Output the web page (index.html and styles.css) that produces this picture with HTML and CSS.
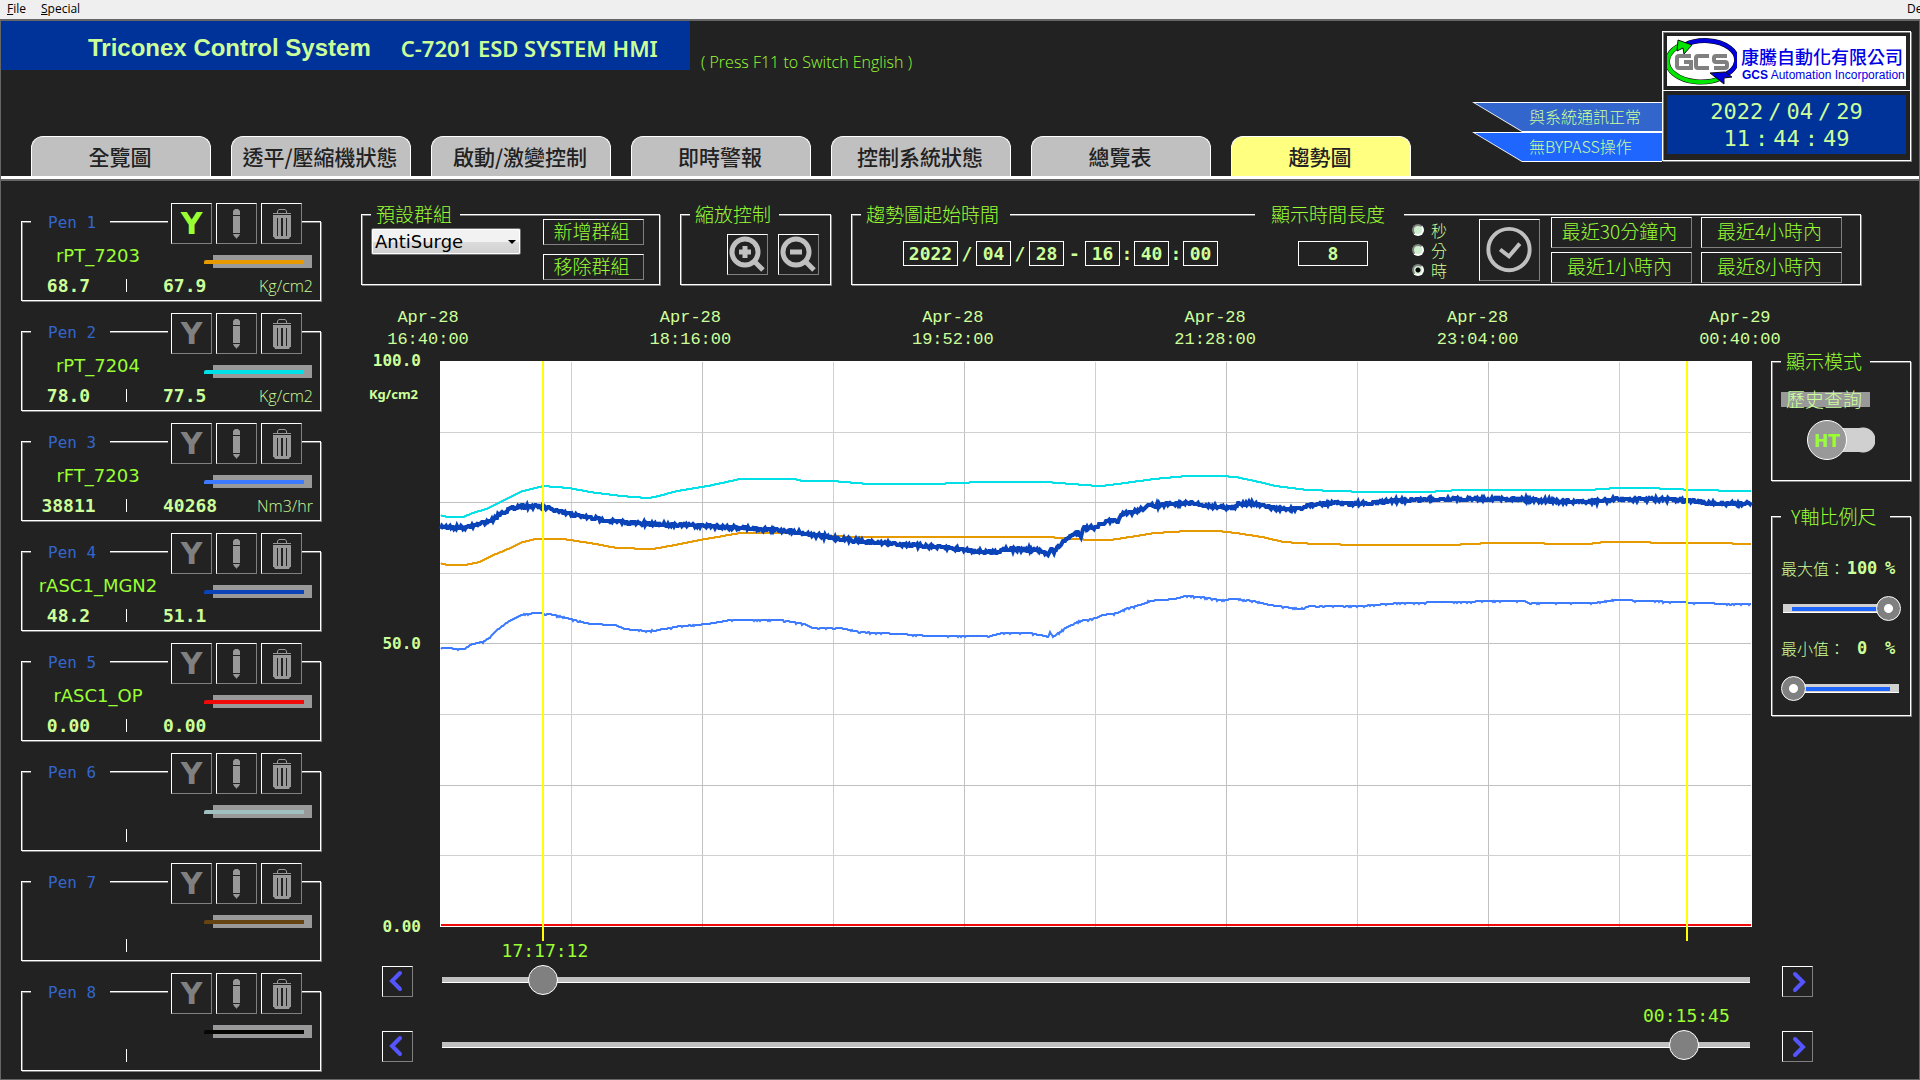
FILE: index.html
```html
<!DOCTYPE html>
<html lang="zh-Hant">
<head>
<meta charset="utf-8">
<title>Triconex Control System</title>
<link rel="stylesheet" href="styles.css">
</head>
<body>
<svg class="defs" aria-hidden="true">
  <symbol id="i-pencil" viewBox="0 0 39 39">
    <path d="M16 7l2-2h3l2 2v4h-7zM16 12h7v17h-7zM16 30h7l-1 2-2 2-.5 1-.5-1-2-2z"/>
  </symbol>
  <symbol id="i-trash" viewBox="0 0 39 39">
    <path d="M15 9V7l2-2h6l2 2v2h4v1H11V9zM16 9h8V7l-1-1h-6l-1 1z"/>
    <path fill-rule="evenodd" d="M11 11h18v22h-1l-1 2H13l-1-2h-1zM15 14v18h1V14zM19 14v18h2V14zM24 14v18h1V14z"/>
  </symbol>
</svg>

<nav class="menubar">
  <a href="#"><u>F</u>ile</a>
  <a href="#"><u>S</u>pecial</a>
  <span class="cut">De</span>
</nav>

<div class="frame">
<header class="header">
  <div class="titles">
    <h1><span class="brand">Triconex Control System</span><span class="system">C-7201 ESD SYSTEM HMI</span></h1>
    <p>( Press F11 to Switch English )</p>
  </div>
  <nav class="tabs">
    <a href="#">全覽圖</a>
    <a href="#">透平/壓縮機狀態</a>
    <a href="#">啟動/激變控制</a>
    <a href="#">即時警報</a>
    <a href="#">控制系統狀態</a>
    <a href="#">總覽表</a>
    <a href="#" class="active">趨勢圖</a>
  </nav>
  <div class="status">
    <div class="flags">
      <div class="flag"><span>與系統通訊正常</span></div>
      <div class="flag bright"><span>無BYPASS操作</span></div>
    </div>
    <div class="plate">
      <div class="logo">
        <svg viewBox="0 0 70 50" width="70" height="50">
          <path d="M54 42A31 19 0 1 1 14 9" fill="none" stroke="#111" stroke-width="5"/>
          <path d="M18 9A31 19 0 0 1 58 39" fill="none" stroke="#111" stroke-width="5"/>
          <path d="M54 42A31 19 0 0 1 14 9" fill="none" stroke="#00e600" stroke-width="4"/>
          <path d="M18 9A31 19 0 0 1 58 39" fill="none" stroke="#0000d8" stroke-width="4"/>
          <path d="M11 4l14 5-8 9-1-6-6 3z" fill="#00e600" stroke="#111"/>
          <path d="M43 37l15-1 7 5-8 1v6z" fill="#0000d8" stroke="#111"/>
          <path d="M24 20H12q-2 0-2 2v8q0 2 2 2h12v-6h-7M42 20H31q-2 0-2 2v8q0 2 2 2h11M60 20H49q-2 0-2 2v2q0 2 2 2h9q2 0 2 2v2q0 2-2 2H47" fill="none" stroke="#808080" stroke-width="4"/>
        </svg>
        <div><span class="zh">康騰自動化有限公司</span><span class="en"><b>GCS</b> Automation Incorporation</span></div>
      </div>
      <div class="clock">
        <time><span>2022</span><span>/</span><span>04</span><span>/</span><span>29</span></time>
        <time><span>11</span><span>:</span><span>44</span><span>:</span><span>49</span></time>
      </div>
    </div>
  </div>
</header>

<div class="content">
<aside class="pens" id="pens"></aside>

<main class="main">
  <div class="toolbar">
    <section class="group preset">
      <h2 class="cap">預設群組</h2>
      <div class="select"><select aria-label="預設群組"><option>AntiSurge</option></select></div>
      <div class="stack">
        <button class="btn">新增群組</button>
        <button class="btn">移除群組</button>
      </div>
    </section>
    <section class="group zoom">
      <h2 class="cap">縮放控制</h2>
      <button class="btn" aria-label="放大"><svg viewBox="0 0 39 39"><circle cx="17" cy="17" r="13"/><path d="M27 27l8 8M11 17h12M17 11v12"/></svg></button>
      <button class="btn" aria-label="縮小"><svg viewBox="0 0 39 39"><circle cx="17" cy="17" r="13"/><path d="M27 27l8 8M11 17h12"/></svg></button>
    </section>
    <section class="group period">
      <h2 class="cap start">趨勢圖起始時間</h2>
      <h2 class="cap length">顯示時間長度</h2>
      <div class="datetime">
        <input class="num year" aria-label="年" value="2022"><span>/</span><input class="num" aria-label="月" value="04"><span>/</span><input class="num" aria-label="日" value="28"><span class="dash">-</span><input class="num" aria-label="時" value="16"><span class="colon">:</span><input class="num" aria-label="分" value="40"><span class="colon">:</span><input class="num" aria-label="秒" value="00">
      </div>
      <input class="num hours" aria-label="顯示時間長度" value="8">
      <div class="units">
        <label><input type="radio" name="unit">秒</label>
        <label><input type="radio" name="unit">分</label>
        <label><input type="radio" name="unit" checked>時</label>
      </div>
      <button class="btn apply" aria-label="套用"><svg viewBox="0 0 59 61"><circle cx="29" cy="30" r="21"/><path d="M20 30l9 7 11-13"/></svg></button>
      <div class="ranges">
        <button class="btn">最近30分鐘內</button>
        <button class="btn">最近4小時內</button>
        <button class="btn">最近1小時內</button>
        <button class="btn">最近8小時內</button>
      </div>
    </section>
  </div>

  <div class="trend">
    <div class="xaxis">
      <span>Apr-28<br>16:40:00</span>
      <span>Apr-28<br>18:16:00</span>
      <span>Apr-28<br>19:52:00</span>
      <span>Apr-28<br>21:28:00</span>
      <span>Apr-28<br>23:04:00</span>
      <span>Apr-29<br>00:40:00</span>
    </div>
    <div class="yaxis">
      <div>100.0<span>Kg/cm2</span></div>
      <div>50.0</div>
      <div>0.00</div>
    </div>
    <div class="plot"><svg id="plot" viewBox="0 0 1312 566" preserveAspectRatio="none"></svg></div>
    <div class="side">
      <section class="group mode">
        <h2 class="cap">顯示模式</h2>
        <span class="badge">歷史查詢</span>
        <button class="toggle" role="switch" aria-checked="false"><span>HT</span></button>
      </section>
      <section class="group scale">
        <h2 class="cap">Y軸比例尺</h2>
        <label for="ymax"><span>最大值：</span><b>100</b><b>%</b></label>
        <input id="ymax" type="range" value="100">
        <label for="ymin"><span>最小值：</span><b>0</b><b>%</b></label>
        <input id="ymin" type="range" value="0">
      </section>
    </div>
    <div class="scrub">
      <button class="btn step" aria-label="游標一向左"><svg viewBox="0 0 29 29"><path d="M17 6l-8 8 8 8"/></svg></button>
      <div class="cursor"><output class="first">17:17:12</output><input type="range" aria-label="游標一" step="0.1" value="6.9"></div>
      <button class="btn step" aria-label="游標一向右"><svg viewBox="0 0 29 29"><path d="M12 7l8 8-8 8"/></svg></button>
    </div>
    <div class="scrub">
      <button class="btn step" aria-label="游標二向左"><svg viewBox="0 0 29 29"><path d="M17 6l-8 8 8 8"/></svg></button>
      <div class="cursor"><output class="second">00:15:45</output><input type="range" aria-label="游標二" step="0.1" value="95.9"></div>
      <button class="btn step" aria-label="游標二向右"><svg viewBox="0 0 29 29"><path d="M12 7l8 8-8 8"/></svg></button>
    </div>
  </div>
</main>
</div>
</div>
<script src="trend.js"></script>
</body>
</html>
```
FILE: styles.css
```css
* { box-sizing: border-box; }

:root {
  --bg: #222;
  --lime: #99ff33;
  --pale: #ccff99;
  --gray: #808080;
  --cjk: "Noto Sans CJK TC", sans-serif;
  --mono: "DejaVu Sans Mono", monospace;
}

body {
  margin: 0;
  min-height: 100vh;
  display: flex;
  flex-direction: column;
  background: var(--bg);
  color: var(--lime);
  font-family: "Noto Sans", var(--cjk);
  overflow-x: hidden;
}

h1, h2, p { margin: 0; font-weight: 400; }
a { color: inherit; text-decoration: none; }
button, input, select { font: inherit; color: inherit; margin: 0; padding: 0; border-radius: 0; }
.defs { display: none; }

/* menu bar */
.menubar {
  display: flex;
  gap: 15px;
  height: 19px;
  padding-left: 7px;
  background: #efefef;
  color: #000;
  font: 12px/17px "Open Sans", sans-serif;
}
.cut { margin-left: auto; width: 13px; overflow: hidden; }

.frame {
  flex: 1;
  display: flex;
  flex-direction: column;
  border: 1px solid #666;
  border-top-width: 2px;
}

/* header */
.header {
  display: grid;
  grid-template-columns: 1fr auto;
  grid-template-rows: 1fr auto;
  height: 160px;
  border-bottom: 2px solid #666;
  box-shadow: inset 0 -3px #fff;
}
.titles { display: flex; }
.titles h1 {
  display: flex;
  align-items: center;
  gap: 30px;
  width: 689px;
  height: 49px;
  padding: 4px 0 0 87px;
  background: #003399;
  color: var(--pale);
}
.brand { font: bold 24px/28px "Liberation Sans", sans-serif; }
.system { font: 600 22px/28px "Noto Sans", sans-serif; }
.titles p { padding: 30px 0 0 11px; font: 300 16px/22px "Open Sans", sans-serif; }

.tabs { grid-row: 2; display: flex; gap: 20px; padding: 0 0 3px 30px; }
.tabs a {
  width: 180px;
  height: 40px;
  padding-right: 2px;
  border: 1px solid #fff;
  border-bottom: 0;
  border-radius: 12px 12px 0 0;
  background: #c0c0c0;
  color: #222;
  font: 500 21px/38px var(--cjk);
  text-align: center;
}
.tabs .active { background: #ffff80; }

.status { grid-column: 2; grid-row: 1 / 3; display: flex; padding: 10px 8px 0 0; }
.flags { display: flex; flex-direction: column; padding-top: 71px; }
.flag {
  width: 190px;
  height: 30px;
  background: #fff;
  clip-path: polygon(0 0, 100% 0, 100% 100%, 50px 100%);
  font: 300 16px/26px var(--cjk);
  color: var(--pale);
}
.flag span {
  display: block;
  margin-top: 1px;
  height: 28px;
  padding-left: 57px;
  background: #3366cc;
  clip-path: polygon(3px 0, 100% 0, 100% 100%, 50px 100%);
}
.bright span { background: #1f66ff; }

.plate {
  width: 249px;
  height: 130px;
  border: 1px solid #fff;
  box-shadow: inset 1px 1px var(--gray), 1px 1px var(--gray);
}
.logo {
  display: flex;
  height: 50px;
  margin: 4px;
  background: #fff;
  color: #0000e6;
  white-space: nowrap;
}
.logo .zh { display: block; padding: 8px 0 0 4px; font: 500 18px/24px var(--cjk); }
.logo .en { display: block; padding-left: 5px; font: 12px/14px "Liberation Sans", sans-serif; }
.clock {
  display: flex;
  flex-direction: column;
  justify-content: center;
  height: 68px;
  padding: 4px;
  border-top: 1px solid #fff;
  background: #003399 content-box;
  color: var(--pale);
}
.clock time { display: flex; justify-content: center; gap: 5px; font: 22px/27px var(--mono); }

/* shared boxes and buttons */
.content { flex: 1; display: flex; }
.group {
  position: relative;
  border: 1px solid #fff;
  box-shadow: inset 1px 1px var(--gray), 1px 1px var(--gray);
}
.cap {
  position: absolute;
  top: -14px;
  left: 9px;
  width: 89px;
  padding-left: 5px;
  background: var(--bg);
  font: 300 19px/26px var(--cjk);
}
.btn {
  display: block;
  border: 1px solid var(--gray);
  border-color: #fff var(--gray) var(--gray) #fff;
  background: var(--bg);
  font: 300 19px/22px var(--cjk);
}
.stack .btn, .ranges .btn { padding: 0 4px 2px 0; }
.btn svg { display: block; width: 100%; height: 100%; }

/* pens */
.pens { width: 340px; padding: 40px 20px 8px; display: flex; flex-direction: column; gap: 30px; }
.pen {
  height: 80px;
  width: 300px;
  border: 1px solid #fff;
  box-shadow: inset 1px 1px var(--gray), 1px 1px var(--gray);
}
.pen-head { display: flex; height: 41px; margin-top: -19px; }
.pen-head h2 {
  width: 79px;
  margin: 7px auto 4px 9px;
  padding-left: 17px;
  background: var(--bg);
  color: #3366cc;
  font: 300 16px/26px var(--mono);
}
.pen-tools { display: flex; gap: 4px; padding: 0 0 0 3px; margin-right: 18px; background: var(--bg); }
.pen-tools .btn { width: 41px; height: 41px; fill: #999; }
.pen-tools .y { color: var(--gray); font: bold 30px/38px "DejaVu Sans", sans-serif; }
.pen-tools .y.on { color: var(--lime); }
.pen-name { display: flex; height: 24px; }
.pen-name span { width: 152px; text-align: center; font: 18px/24px "DejaVu Sans", sans-serif; white-space: nowrap; }
.swatch { align-self: flex-end; width: 99px; height: 13px; margin-left: 39px; background: #999; }
.swatch i { display: block; width: 100px; height: 4px; margin: 5px 0 0 -9px; border-radius: 2px 0 0 0; background: currentColor; }
.pen-values { display: flex; align-items: center; height: 35px; color: var(--pale); font: bold 18px/24px var(--mono); }
.pen-values span:first-child { width: 93px; text-align: center; }
.pen-values i { width: 1px; height: 13px; margin: 0 36px 0 11px; background: #fff; }
.pen-values .unit { margin: 0 7px 0 auto; font: 300 16px/24px "Open Sans", sans-serif; }

/* toolbar */
.main { flex: 1; min-width: 0; display: flex; flex-direction: column; padding: 33px 8px 17px 20px; }
.toolbar { display: flex; gap: 20px; height: 71px; padding-right: 50px; }
.preset { width: 299px; display: flex; justify-content: space-between; padding: 4px 15px 4px 9px; }
.preset .stack { display: grid; gap: 9px; }
.preset .btn { width: 101px; }
.select { position: relative; width: 150px; height: 27px; margin-top: 9px; color: #000; }
.select select {
  width: 100%;
  height: 100%;
  padding-left: 3px;
  appearance: none;
  border: 1px solid #707070;
  border-radius: 2px;
  background: linear-gradient(#f2f2f2 50%, #dcdcdc 50%, #cfcfcf);
  box-shadow: inset 0 0 0 1px #fff;
  font: 18px/24px "DejaVu Sans", sans-serif;
}
.select::after {
  content: "";
  position: absolute;
  right: 5px;
  top: 12px;
  border: 4px solid transparent;
  border-top-color: #000;
  border-bottom: 0;
}
.zoom { width: 151px; display: flex; gap: 10px; padding: 19px 0 0 46px; }
.zoom .btn { width: 41px; height: 41px; }
.zoom svg, .apply svg { fill: none; stroke: #c0c0c0; stroke-width: 4; }
.zoom circle, .zoom path { stroke-width: 5; }
.period { flex: 1; display: flex; align-items: center; padding: 0 18px 0 51px; }
.period .start { width: 149px; }
.period .length { left: 403px; width: 149px; padding-left: 16px; }
.num {
  width: 35px;
  height: 25px;
  border: 1px solid #fff;
  background: var(--bg);
  color: var(--pale);
  text-align: center;
  font: bold 18px/22px var(--mono);
}
.datetime { display: flex; align-items: center; color: var(--pale); font: bold 18px/24px var(--mono); margin-top: 8px; }
.datetime span { width: 18px; text-align: center; }
.datetime .dash { width: 21px; }
.datetime .colon { width: 14px; }
.year { width: 55px; }
.hours { width: 70px; margin: 8px auto 0 80px; }
.units { display: grid; color: var(--pale); font: 300 16px/20px var(--cjk); }
.units label { display: flex; align-items: center; gap: 7px; }
.units input {
  appearance: none;
  width: 12px;
  height: 12px;
  border: 2px solid;
  border-color: var(--gray) #fff #fff var(--gray);
  border-radius: 50%;
  background: #cceecc;
}
.units input:checked { background: radial-gradient(circle, #000 2px, #cceecc 3px); }
.apply { width: 61px; height: 62px; margin: 0 11px 0 32px; }
.ranges { display: grid; grid-template-columns: 141px 141px; gap: 4px 9px; }
.ranges .btn { height: 31px; }

/* trend */
.trend {
  flex: 1;
  display: grid;
  grid-template-columns: 79px 1fr 159px;
  grid-template-rows: 76px minmax(566px, 1fr) 70px 65px;
}
.xaxis {
  grid-column: 2;
  display: flex;
  justify-content: space-between;
  margin: 22px -38px 0 -62px;
  color: var(--pale);
  font: 17px/22px "Liberation Mono", monospace;
}
.xaxis span { width: 100px; text-align: center; }
.yaxis {
  grid-area: 2 / 1;
  display: grid;
  grid-template-rows: 1fr auto 1fr;
  margin: -10px 0;
  padding-right: 19px;
  color: var(--pale);
  font: bold 16px/20px var(--mono);
  text-align: right;
}
.yaxis div:last-child { align-self: end; }
.yaxis span { display: block; margin-top: 13px; padding-right: 3px; font: bold 13px/20px "Noto Sans", sans-serif; }
.plot { grid-area: 2 / 2; background: #fff; position: relative; }
.plot svg { position: absolute; width: 100%; height: 100%; overflow: visible; fill: none; }
.plot path { vector-effect: non-scaling-stroke; }
.side { grid-area: 2 / 3; padding-left: 19px; }
.mode { height: 120px; padding: 30px 9px 0; }
.badge {
  display: block;
  width: 89px;
  height: 15px;
  padding-left: 5px;
  background: #999;
  color: var(--pale);
  font: 300 19px/13px var(--cjk);
}
.toggle {
  display: block;
  width: 68px;
  height: 40px;
  margin: 13px 0 0 26px;
  border: 0;
  background: linear-gradient(#d0d0d0, #d0d0d0) 20px 8px / 36px 24px no-repeat, radial-gradient(circle at 56px 20px, #d0d0d0 12px, transparent 13px);
}
.toggle span {
  display: block;
  width: 40px;
  height: 40px;
  border: 1px solid #fff;
  border-radius: 50%;
  background: #999;
  font: bold 17px/40px "DejaVu Sans", sans-serif;
}
.scale { height: 200px; margin-top: 35px; padding: 37px 9px 0; }
.side .scale .cap { width: 109px; padding-left: 10px; }
.scale label { display: flex; align-items: center; height: 28px; color: var(--pale); font: 300 16px/28px var(--cjk); white-space: nowrap; }
.scale label span { width: 64px; }
.scale b { width: 34px; text-align: center; font: bold 17px/28px var(--mono); }
.scale b:last-child { width: 22px; }
.scale input {
  display: block;
  appearance: none;
  width: 120px;
  height: 25px;
  margin: 14px 0 13px;
  background: linear-gradient(#1f66ff, #1f66ff) center / 98px 4px no-repeat, linear-gradient(#d0d0d0 8px, #fff 8px) center / 116px 9px no-repeat;
}
.scale input::-webkit-slider-thumb {
  appearance: none;
  width: 25px;
  height: 25px;
  border: 1px solid #fff;
  border-radius: 50%;
  background: radial-gradient(circle, #fff 4px, var(--gray) 5px);
}

/* time cursors */
.scrub { grid-column: 1 / 4; display: flex; align-items: flex-end; padding: 0 98px 0 21px; }
.step { width: 31px; height: 31px; flex: none; fill: none; stroke: #5555ff; stroke-width: 4; stroke-linecap: round; }
.cursor { position: relative; flex: 1; height: 30px; margin: 0 30px 2px 27px; }
.cursor output { position: absolute; top: -26px; width: 100px; margin-left: -50px; text-align: center; font: 18px/24px var(--mono); }
.cursor .first { left: 8%; }
.cursor .second { left: 95%; }
.cursor input {
  display: block;
  appearance: none;
  width: 100%;
  height: 30px;
  background: linear-gradient(#c0c0c0 5px, #fff 5px) center / calc(100% - 4px) 6px no-repeat;
}
.cursor input::-webkit-slider-thumb {
  appearance: none;
  width: 30px;
  height: 30px;
  border: 1px solid #fff;
  border-radius: 50%;
  background: var(--gray);
}
```
FILE: trend.js
```js
const pens = [
  ["rPT_7203", "68.7", "67.9", "Kg/cm2", "#e69a00"],
  ["rPT_7204", "78.0", "77.5", "Kg/cm2", "#00e0e6"],
  ["rFT_7203", "38811", "40268", "Nm3/hr", "#3c7bff"],
  ["rASC1_MGN2", "48.2", "51.1", "", "#0b44b8"],
  ["rASC1_OP", "0.00", "0.00", "", "#f00a0a"],
  ["", "", "", "", "#a0bfbf"],
  ["", "", "", "", "#664411"],
  ["", "", "", "", "#060604"]
];

document.getElementById("pens").innerHTML = pens.map(([name, a, b, unit, color], i) => `
  <section class="pen">
    <div class="pen-head">
      <h2>Pen ${i + 1}</h2>
      <div class="pen-tools">
        <button class="btn y${i === 0 ? " on" : ""}">Y</button>
        <button class="btn" aria-label="編輯"><svg><use href="#i-pencil"/></svg></button>
        <button class="btn" aria-label="刪除"><svg><use href="#i-trash"/></svg></button>
      </div>
    </div>
    <div class="pen-name"><span>${name}</span><div class="swatch" style="color:${color}"><i></i></div></div>
    <div class="pen-values"><span>${a}</span><i></i><span>${b}</span><span class="unit">${unit}</span></div>
  </section>`).join("");

// Samples as x,y pairs in plot units, with the noise height of each pen.
const traces = [
  { color: "#e69a00", width: 2, noise: 0, pts: "0,202 7,204 25,204 40,201 49,196 68,188 83,181 95,178 123,178 150,182 177,187 213,188 235,184 260,179 300,172 350,172 390,175 420,176 610,176 630,178 658,179 670,179 690,176 715,172 747,170 778,170 796,172 822,176 844,181 875,183 926,184 1010,184 1050,182 1100,182 1110,183 1148,183 1164,181 1210,181 1212,182 1274,182 1312,183" },
  { color: "#00e0e6", width: 2, noise: 0, pts: "0,154 7,156 23,156 33,152 49,147 68,137 83,130 103,125 129,127 150,131 181,135 207,137 215,136 237,130 268,125 300,118 354,118 363,120 393,120 428,123 493,123 541,121 606,121 658,125 662,125 685,122 714,118 747,115 782,115 796,116 819,121 836,125 868,129 926,131 988,131 1019,129 1149,129 1176,127 1207,127 1256,129 1301,130 1312,130" },
  { color: "#3c7bff", width: 2, noise: 1, pts: "0,287 25,288 30,284 45,280 50,276 57,269 68,261 83,253 100,252 115,254 150,263 175,264 185,268 207,270 225,268 240,265 268,263 290,259 340,259 365,263 372,267 400,267 420,271 460,273 490,275 550,275 563,272 590,272 606,275 608,276 610,271 613,276 625,267 640,260 656,257 662,254 678,252 685,248 703,243 708,240 735,238 745,235 762,236 780,239 796,238 814,240 830,244 860,248 870,245 920,245 960,242 1010,241 1060,240 1085,240 1090,242 1154,242 1175,239 1210,240 1260,242 1290,243 1312,243" },
  { color: "#0b44b8", width: 4, noise: 2, pts: "0,166 25,167 40,163 52,159 60,153 70,148 80,145 103,146 120,151 150,157 180,161 207,163 270,165 305,167 350,170 393,177 428,181 470,184 510,187 545,191 558,191 563,188 595,189 608,193 611,187 614,192 617,187 628,177 638,171 641,175 643,167 655,166 670,160 678,160 682,154 700,149 708,145 750,142 770,145 795,147 798,143 810,142 822,145 840,148 863,148 867,144 900,142 926,143 950,140 1000,138 1080,138 1130,141 1150,141 1180,138 1240,139 1280,143 1312,142" },
  { color: "#f00a0a", width: 2, noise: 0, pts: "0,564 1312,564" }
];

let seed = 7;
const random = () => (seed = (seed * 16807) % 2147483647) / 2147483647;

function trace({ pts, noise }) {
  const p = pts.split(" ").map(s => s.split(",").map(Number));
  let d = "", k = 0;
  for (let x = 1; x <= 1311; x += 1) {
    while (p[k + 1][0] < x) k++;
    const [x0, y0] = p[k], [x1, y1] = p[k + 1];
    let y = y0 + (y1 - y0) * (x - x0) / (x1 - x0);
    if (noise === 2) y += (random() - 0.5) * 3;
    if (noise === 1) y += (random() < 0.12 ? 1 : 0);
    d += (d ? "L" : "M") + x + " " + Math.round(y);
  }
  return d;
}

const line = (d, color, width) => `<path d="${d}" stroke="${color}" stroke-width="${width}"/>`;
let grid = "";
for (let i = 1; i < 10; i++) grid += line(`M${i * 131}.5 1V566`, i % 2 ? "#d0d0d0" : "#c0c0c0", 1);
for (let i = 1; i < 8; i++) grid += line(`M0 ${Math.round(i * 70.6)}.5H1311`, i % 2 ? "#d0d0d0" : "#c0c0c0", 1);
document.getElementById("plot").innerHTML = grid
  + traces.map(t => line(trace(t), t.color, t.width)).join("")
  + line("M103 0V580M1247 0V580", "#ffff00", 2);
```
